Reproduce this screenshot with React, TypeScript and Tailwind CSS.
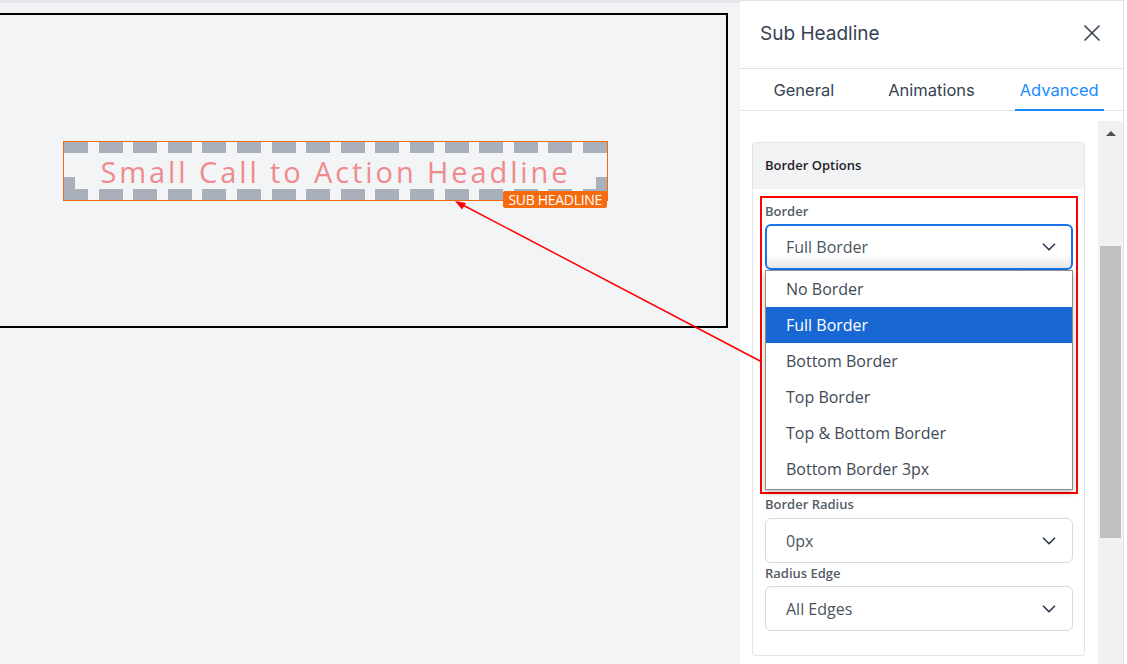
import React from 'react';
import { ChevronDown, X } from 'lucide-react';

const options = [
  'No Border',
  'Full Border',
  'Bottom Border',
  'Top Border',
  'Top & Bottom Border',
  'Bottom Border 3px',
];

const tabs = ['General', 'Animations', 'Advanced'];

const dashes = Array.from({ length: 16 });

// one row of the dashed border (top or bottom)
const DashRow = () => (
  <div className="flex h-[11px] shrink-0 justify-between">
    {dashes.map((_, i) => (
      <div key={i} className="h-full w-[24px] bg-[#a9b0bc]" />
    ))}
  </div>
);

const DashSide = () => (
  <div className="flex w-[11px] shrink-0 flex-col justify-end">
    <div className="h-[12px] bg-[#a9b0bc]" />
  </div>
);

const SelectBox = ({ value }: { value: string }) => (
  <div className="flex h-[45px] items-center justify-between rounded-[6px] border border-[#d6d9de] bg-white pl-[20px] pr-[12px] text-[16px] text-[#4a5562]">
    <span>{value}</span>
    <ChevronDown className="h-[22px] w-[22px] text-[#2d3a4b]" strokeWidth={1.8} />
  </div>
);

export default function App() {
  return (
    <div className="relative flex h-[664px] w-[1127px] overflow-hidden bg-white font-['Open_Sans',sans-serif]">
      {/* Canvas */}
      <div className="flex w-[740px] flex-col bg-[#f3f4f6]">
        <div className="h-[3px] bg-[#e4e6ea]" />
        <div className="mt-[10px] h-[315px] w-[728px] border-y-2 border-r-2 border-black pl-[63px] pt-[126px]">
          <div className="relative flex h-[60px] w-[545px] flex-col border border-[#f26a10]">
            <DashRow />
            <div className="flex flex-1">
              <DashSide />
              <div className="flex flex-1 items-center justify-center">
                <span className="text-[29px] leading-none tracking-[2.9px] text-[#ef8a8d]">
                  Small Call to Action Headline
                </span>
              </div>
              <DashSide />
            </div>
            <DashRow />
            <span className="absolute bottom-[-8px] right-0 rounded-[2px] bg-[#f76b10] px-[5px] text-[14px] leading-[17px] tracking-[-0.3px] text-white">
              SUB HEADLINE
            </span>
          </div>
        </div>
      </div>

      {/* Settings panel */}
      <div className="flex w-[384px] flex-col border-r border-t border-[#dfe2e6] bg-white">
        <div className="flex h-[68px] shrink-0 items-center justify-between border-b border-[#dfe2e6] pl-[20px] pr-[17px]">
          <span className="font-['Inter',sans-serif] text-[19px] text-[#364352]">Sub Headline</span>
          <X className="mb-[4px] h-[28px] w-[28px] text-[#3f4a57]" strokeWidth={1.5} />
        </div>
        <div className="flex h-[42px] shrink-0 border-b border-[#dfe2e6] font-['Inter',sans-serif] text-[16.5px]">
          {tabs.map((t) => (
            <div key={t} className="flex flex-1 justify-center">
              <span
                className={
                  t === 'Advanced'
                    ? '-mb-px flex items-center border-b-2 border-[#1a8cff] px-[5px] pt-[2px] text-[#1a8cff]'
                    : 'flex items-center px-[5px] pt-[2px] text-[#364352]'
                }
              >
                {t}
              </span>
            </div>
          ))}
        </div>

        <div className="flex min-h-0 flex-1">
          <div className="flex-1 pl-[12px] pr-[13px] pt-[31px]">
            <div className="rounded-[3px] border border-[#e3e5e8]">
              <div className="flex h-[46px] items-center bg-[#f2f3f5] px-[12px] text-[13px] font-semibold text-[#1f2329]">
                Border Options
              </div>
              <div className="pb-[24px] pl-[12px] pr-[11px] pt-[14px]">
                <div className="text-[13px] font-semibold leading-[17px] text-[#555d68]">Border</div>
                <div className="relative mt-[4px]">
                  <div className="flex h-[46px] items-center justify-between rounded-[6px] border-2 border-[#1a73e8] bg-linear-to-b from-white from-70% to-[#e6e6e6] pl-[19px] pr-[11px] text-[16px] text-[#4a5562]">
                    <span>Full Border</span>
                    <ChevronDown className="h-[22px] w-[22px] text-[#2d3a4b]" strokeWidth={1.8} />
                  </div>
                  <div className="absolute left-0 right-0 top-[46px] z-10 border border-[#8d8d8d] bg-white pb-[2px] shadow-[0_3px_6px_rgba(0,0,0,0.25)]">
                    {options.map((o) => (
                      <div
                        key={o}
                        className={
                          o === 'Full Border'
                            ? 'flex h-[36px] items-center bg-[#1967d2] pl-[20px] text-[16px] text-white'
                            : 'flex h-[36px] items-center pl-[20px] text-[16px] text-[#3f4a56]'
                        }
                      >
                        {o}
                      </div>
                    ))}
                  </div>
                </div>
                <div className="h-[226px]" />
                <div className="text-[13px] font-semibold leading-[17px] text-[#555d68]">Border Radius</div>
                <div className="mt-[5px]">
                  <SelectBox value="0px" />
                </div>
                <div className="mt-[2px] text-[13px] font-semibold leading-[17px] text-[#555d68]">Radius Edge</div>
                <div className="mt-[4px]">
                  <SelectBox value="All Edges" />
                </div>
              </div>
            </div>
          </div>
          {/* scrollbar */}
          <div className="relative mt-[10px] w-[25px] bg-[#f1f1f1]">
            <div className="mx-auto mt-[10px] h-0 w-0 border-x-[5px] border-b-[5px] border-x-transparent border-b-[#505050]" />
            <div className="absolute left-[2px] right-[2px] top-[125px] h-[292px] bg-[#c1c1c1]" />
          </div>
        </div>
      </div>
      <div className="flex-1 bg-white" />

      {/* Annotation overlay */}
      <div className="pointer-events-none absolute left-[760px] top-[196px] h-[298px] w-[318px] border-2 border-[#ff0000]" />
      <svg className="pointer-events-none absolute left-0 top-0" width="1127" height="664">
        <line x1="762" y1="362" x2="460" y2="203.5" stroke="#ff0000" strokeWidth="1.5" />
        <polygon points="455,201 466,203 462,209.5" fill="#ff0000" />
      </svg>
    </div>
  );
}
